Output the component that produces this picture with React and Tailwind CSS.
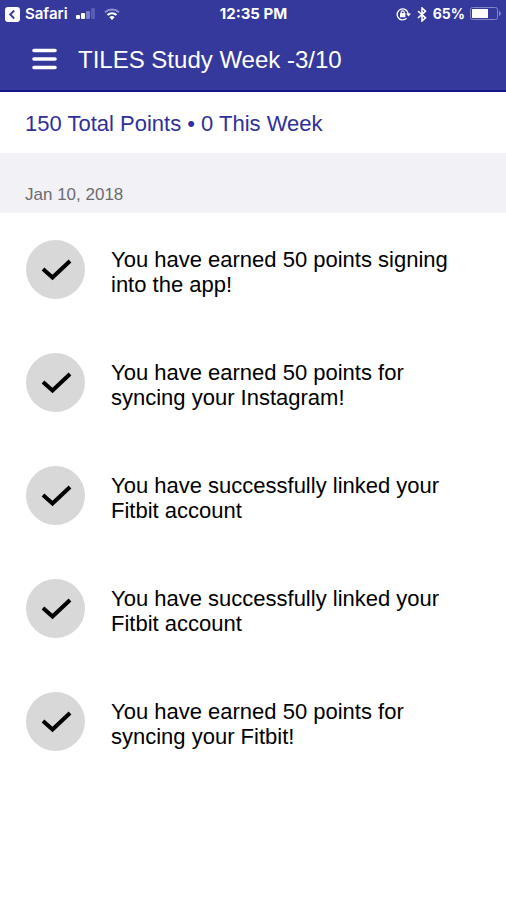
const activities = [
  'You have earned 50 points signing into the app!',
  'You have earned 50 points for syncing your Instagram!',
  'You have successfully linked your Fitbit account',
  'You have successfully linked your Fitbit account',
  'You have earned 50 points for syncing your Fitbit!',
];

function StatusBar() {
  return (
    <div className="grid h-7 grid-cols-[1fr_auto_1fr] items-center pr-1 pl-[5px] font-['Inter',sans-serif] text-[15px] leading-5 font-bold">
      <div className="flex items-center">
        <a href="#safari" className="flex items-center gap-[5px] font-semibold">
          <svg width="15" height="15" viewBox="0 0 15 15" aria-hidden="true">
            <rect width="15" height="15" rx="3" fill="#fff" />
            <path d="M9.2 3.5 5.2 7.5l4 4" fill="none" stroke="#35399b" strokeWidth="1.8" />
          </svg>
          Safari
        </a>
        <svg className="ml-2" width="20" height="12" viewBox="0 0 20 12" aria-label="Signal">
          <rect x="0" y="7" width="4" height="4" rx="1" fill="#fff" />
          <rect x="5" y="5" width="4" height="6" rx="1" fill="#fff" />
          <rect x="10" y="3" width="4" height="8" rx="1" fill="#7c7fc5" />
          <rect x="15" y="0" width="4" height="11" rx="1" fill="#595db0" />
        </svg>
        <svg className="ml-2" width="16" height="12" viewBox="0 0 16 12" aria-label="Wi-Fi">
          <path d="M1 4.2a10.5 10.5 0 0 1 14 0" fill="none" stroke="#8f92ce" strokeWidth="2" />
          <path d="M3.5 7a6.6 6.6 0 0 1 9 0" fill="none" stroke="#fff" strokeWidth="2" />
          <path d="M8 12 5.4 9.3a3.8 3.8 0 0 1 5.2 0Z" fill="#fff" />
        </svg>
      </div>
      <time>12:35 PM</time>
      <div className="flex items-center justify-end">
        <svg width="15" height="14" viewBox="0 0 15 14" aria-label="Rotation locked">
          <path d="M10.6 11.3A5.5 5.5 0 1 1 12.2 7" fill="none" stroke="#fff" strokeWidth="1.4" />
          <path d="M10 6.5h5l-2.5 3Z" fill="#fff" />
          <rect x="4" y="6" width="5.400" height="4.200" rx="0.5" fill="#fff" />
          <path d="M5.2 6.5V5.3a1.5 1.5 0 0 1 3 0v1.2" fill="none" stroke="#fff" strokeWidth="1.2" />
        </svg>
        <svg className="ml-[6px]" width="10" height="15" viewBox="0 0 10 15" aria-label="Bluetooth">
          <path d="m1 4 7.5 6.8L5 14V1l3.5 3.2L1 11" fill="none" stroke="#fff" strokeWidth="1.6" />
        </svg>
        <span className="ml-[6px] text-[14px]">65%</span>
        <svg className="ml-[5px]" width="32" height="14" viewBox="0 0 32 14" aria-label="Battery">
          <rect x="0.5" y="0.5" width="27" height="12" rx="2" fill="none" stroke="#8285c6" />
          <rect x="2" y="2" width="16" height="9" rx="0.5" fill="#fff" />
          <path d="M29 4c2.500 1 2.500 4 0 5Z" fill="#8285c6" />
        </svg>
      </div>
    </div>
  );
}

function Activity({ children }) {
  return (
    <li className="flex items-center gap-[26px] px-[26px] py-[27px]">
      <span className="flex size-[59px] shrink-0 items-center justify-center rounded-full bg-[#d8d8d8]">
        <svg width="32" height="24" viewBox="0 0 32 24" aria-hidden="true">
          <path d="m3 11 9.500 8.500L30 3" fill="none" stroke="#000" strokeWidth="4" />
        </svg>
      </span>
      <p className="max-w-[350px] pt-[5px] text-[22px] leading-[25px]">{children}</p>
    </li>
  );
}

export default function App() {
  return (
    <div className="min-h-screen bg-white font-['Liberation_Sans',Arial,sans-serif] text-black">
      <header className="border-b-2 border-[#15158a] bg-[#35399b] text-white">
        <StatusBar />
        <div className="flex h-[62px] items-center gap-[21px] px-8">
          <button type="button" aria-label="Menu" className="flex items-center">
            <svg width="25" height="22" viewBox="0 0 25 22" aria-hidden="true">
              <path
                d="M2 2.500h21M2 11h21M2 19.500h21"
                stroke="#fff"
                strokeWidth="3.600"
                strokeLinecap="round"
              />
            </svg>
          </button>
          <h1 className="pt-[2px] text-[24px] leading-7">TILES Study Week -3/10</h1>
        </div>
      </header>
      <main>
        <p className="pt-[19px] pr-[25px] pb-[17px] pl-[25px] text-[22px] leading-[25px] text-[#30309a]">
          150 Total Points • 0 This Week
        </p>
        <section>
          <h2 className="bg-[#f1f1f6] px-[25px] pt-8 pb-2 text-[17px] leading-5 text-[#6b6b70]">
            Jan 10, 2018
          </h2>
          <ul>
            {activities.map((text, index) => (
              <Activity key={index}>{text}</Activity>
            ))}
          </ul>
        </section>
      </main>
    </div>
  );
}
